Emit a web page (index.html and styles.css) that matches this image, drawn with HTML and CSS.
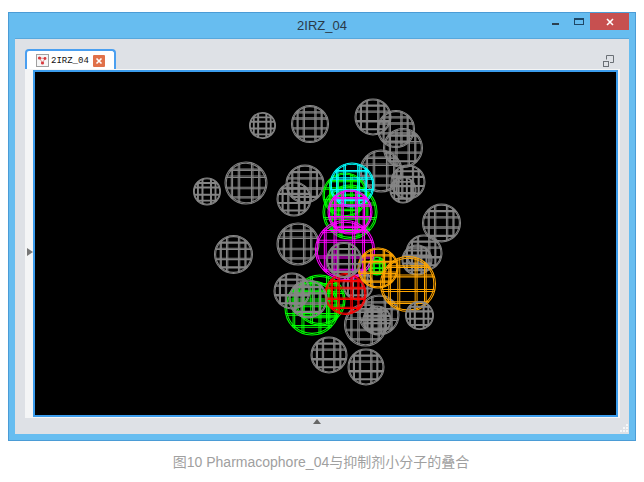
FILE: index.html
```html
<!DOCTYPE html>
<html lang="en">
<head>
  <meta charset="UTF-8" />
  <meta name="viewport" content="width=device-width, initial-scale=1.0"/>
  <title>2IRZ_04</title>
  <link rel="stylesheet" href="styles.css">
</head>
<body>
  <div class="window">
    <div class="titlebar">
      <span></span>
      <span class="title">2IRZ_04</span>
      <div class="controls">
        <span class="btn-min"></span>
        <span class="btn-max"></span>
        <span class="btn-close">
          <svg width="10" height="10" viewBox="0 0 10 10"><path class="x-mark" d="M2 2L8 8M8 2L2 8"/></svg>
        </span>
      </div>
    </div>

    <div class="panel">
      <div class="tabrow">
        <div class="tab">
          <svg class="tab-icon" width="13" height="13" viewBox="0 0 13 13">
            <rect class="tab-icon-box" x="0.5" y="0.5" width="12" height="12"/>
            <path class="tab-icon-link" d="M3.5 4L9 4.5L6.5 9Z"/>
            <circle class="tab-icon-dot" cx="3.5" cy="4" r="1.6"/>
            <circle class="tab-icon-dot" cx="9" cy="4.5" r="1.4"/>
            <circle class="tab-icon-dot" cx="6.5" cy="9" r="1.6"/>
          </svg>
          <span class="tab-label">2IRZ_04</span>
          <span class="tab-close">
            <svg width="12" height="12" viewBox="0 0 12 12"><path class="x-mark" d="M3.5 3.5L8.5 8.5M8.5 3.5L3.5 8.5"/></svg>
          </span>
        </div>
        <svg class="restore" width="11" height="12" viewBox="0 0 11 12">
          <path class="restore-line" d="M3.5 4.5V0.5H10.5V7.5H7"/>
          <rect class="restore-line" x="0.5" y="6.5" width="5" height="5"/>
        </svg>
      </div>

      <div class="frame">
        <span class="arrow-left"></span>
        <svg class="scene" viewBox="35 72 581 343">
          <defs>
            <g id="ball">
              <circle class="wire" r="1"/>
              <circle class="wire" r="0.94"/>
              <path class="wire" d="M-.96 -.26H.96M-.94 -.33H.94M-.8 -.6H.8M-.75 -.66H.75M-.96 .2H.96M-.94 .27H.94M-.76 .65H.76M-.7 .71H.7"/>
              <path class="wire" d="M-.3 -.95V.95M-.37 -.92V.92M-.64 -.76V.76M-.7 -.7V.7M.26 -.96V.96M.33 -.94V.94M.6 -.8V.8M.66 -.75V.75"/>
            </g>
          </defs>

          <g class="gray">
            <use href="#ball" transform="translate(262.5 125.5) scale(13)"/>
            <use href="#ball" transform="translate(310 124) scale(18.5)"/>
            <use href="#ball" transform="translate(246 183) scale(21)"/>
            <use href="#ball" transform="translate(207 191.5) scale(13.5)"/>
            <use href="#ball" transform="translate(305 184) scale(19)"/>
            <use href="#ball" transform="translate(294 199) scale(17)"/>
            <use href="#ball" transform="translate(298 244) scale(21)"/>
            <use href="#ball" transform="translate(233.5 254.5) scale(19)"/>
            <use href="#ball" transform="translate(373 117) scale(18)"/>
            <use href="#ball" transform="translate(396 129) scale(18.5)"/>
            <use href="#ball" transform="translate(403 148) scale(19.5)"/>
            <use href="#ball" transform="translate(381 171) scale(21)"/>
            <use href="#ball" transform="translate(408 182) scale(17)"/>
            <use href="#ball" transform="translate(403 190) scale(13)"/>
            <use href="#ball" transform="translate(441.5 223) scale(19)"/>
            <use href="#ball" transform="translate(424 253) scale(18)"/>
            <use href="#ball" transform="translate(417 260) scale(15)"/>
            <use href="#ball" transform="translate(358 285) scale(15)"/>
            <use href="#ball" transform="translate(365.5 325) scale(21)"/>
            <use href="#ball" transform="translate(379 315) scale(20)"/>
            <use href="#ball" transform="translate(377 320) scale(14)"/>
          </g>
          <g class="green">
            <use href="#ball" transform="translate(345 195) scale(22)"/>
            <use href="#ball" transform="translate(350 212) scale(27)"/>
            <use href="#ball" transform="translate(377 266) scale(9)"/>
          </g>
          <g class="cyan">
            <use href="#ball" transform="translate(352 185) scale(22)"/>
          </g>
          <g class="magenta">
            <use href="#ball" transform="translate(350 212) scale(22)"/>
            <use href="#ball" transform="translate(345 250) scale(29.5)"/>
          </g>
          <g class="orange">
            <use href="#ball" transform="translate(378 268) scale(20)"/>
            <use href="#ball" transform="translate(408 284) scale(27.5)"/>
          </g>
          <g class="green">
            <use href="#ball" transform="translate(320 300) scale(25)"/>
            <use href="#ball" transform="translate(312 308) scale(27)"/>
          </g>
          <g class="red">
            <use href="#ball" transform="translate(345.5 294) scale(20.5)"/>
          </g>
          <g class="gray">
            <use href="#ball" transform="translate(344 260) scale(17.5)"/>
            <use href="#ball" transform="translate(292 291) scale(18)"/>
            <use href="#ball" transform="translate(308 299) scale(19)"/>
            <use href="#ball" transform="translate(419.5 315.5) scale(14)"/>
            <use href="#ball" transform="translate(329 355) scale(18)"/>
            <use href="#ball" transform="translate(366 367) scale(18)"/>
          </g>
        </svg>
      </div>

      <div class="footer">
        <span class="arrow-up"></span>
        <svg class="grip" width="9" height="9" viewBox="0 0 9 9">
          <path class="grip-dots" d="M6 0h2v2H6zM3 3h2v2H3zM6 3h2v2H6zM0 6h2v2H0zM3 6h2v2H3zM6 6h2v2H6z"/>
        </svg>
      </div>
    </div>
  </div>

  <p class="caption">图10 Pharmacophore_04与抑制剂小分子的叠合</p>
</body>
</html>
```

FILE: styles.css
```css
* {
  box-sizing: border-box;
}

body {
  margin: 0;
  background: #fff;
  font-family: "Liberation Sans", "Noto Sans CJK SC", sans-serif;
}

.window {
  width: 628px;
  height: 429px;
  margin: 12px 8px 0;
  padding: 0 6px 6px;
  display: flex;
  flex-direction: column;
  background: #67bdf0;
  border: 1px solid #4b9cd6;
}

.titlebar {
  height: 25px;
  flex: none;
  display: grid;
  grid-template-columns: 1fr auto 1fr;
  align-items: start;
}

.title {
  margin-top: 5px;
  font-size: 13px;
  line-height: 15px;
  color: #2a3a48;
}

.controls {
  display: flex;
  justify-content: flex-end;
  align-items: flex-start;
}

.btn-min {
  width: 7px;
  height: 2px;
  margin-top: 10px;
  background: #2b4050;
}

.btn-max {
  width: 10px;
  height: 7px;
  margin: 5px 0 0 15px;
  border: 1px solid #1f4766;
  border-top-width: 2px;
}

.btn-close {
  width: 39px;
  height: 17px;
  margin-left: 6px;
  display: flex;
  align-items: center;
  justify-content: center;
  background: #c75050;
}

.x-mark {
  fill: none;
  stroke: #fff;
  stroke-width: 1.6;
}

.panel {
  flex: 1;
  display: flex;
  flex-direction: column;
  padding-top: 10px;
  background: #dee1e6;
  border-top: 1px solid #58a8dc;
}

.tabrow {
  height: 20px;
  flex: none;
  display: flex;
  justify-content: space-between;
  align-items: flex-start;
  padding: 0 15px 0 10px;
}

.tab {
  width: 91px;
  height: 20px;
  display: flex;
  align-items: center;
  padding: 1px 0 0 9px;
  background: #fff;
  border: 2px solid #4a9ff0;
  border-bottom: none;
  border-radius: 4px 4px 0 0;
}

.tab-icon {
  flex: none;
}

.tab-icon-box {
  fill: #f6f6f6;
  stroke: #a0a0a0;
}

.tab-icon-link {
  fill: none;
  stroke: #e09090;
}

.tab-icon-dot {
  fill: #d8383c;
}

.tab-label {
  margin-left: 2px;
  font-family: "Liberation Mono", monospace;
  font-size: 9px;
  color: #111;
}

.tab-close {
  width: 12px;
  height: 12px;
  margin-left: 4px;
  background: #e0714a;
  border-radius: 1px;
}

.tab-close svg {
  display: block;
}

.restore {
  margin-top: 6px;
}

.restore-line {
  fill: none;
  stroke: #6a6f75;
}

.frame {
  position: relative;
  height: 349px;
  flex: none;
  margin: 0 9px 0 10px;
  padding: 1px 1px 1px 8px;
  background: #f4f5f6;
}

.arrow-left {
  position: absolute;
  left: 2px;
  top: 179px;
  border-left: 6px solid #777;
  border-top: 4px solid transparent;
  border-bottom: 4px solid transparent;
}

.scene {
  display: block;
  width: 585px;
  height: 347px;
  background: #000;
  border: 2px solid #3b9cec;
}

.wire {
  fill: none;
  stroke-width: 1.05;
  vector-effect: non-scaling-stroke;
}

.gray { stroke: #858585; }
.green { stroke: #00ff00; }
.cyan { stroke: #00ffff; }
.magenta { stroke: #ff00ff; }
.orange { stroke: #ffa500; }
.red { stroke: #ff0000; }

.footer {
  flex: 1;
  display: flex;
  justify-content: center;
  position: relative;
  padding-right: 10px;
}

.arrow-up {
  width: 0;
  height: 0;
  margin-top: 1px;
  border-bottom: 5px solid #666;
  border-left: 4px solid transparent;
  border-right: 4px solid transparent;
}

.grip {
  position: absolute;
  right: 0;
  bottom: 1px;
}

.grip-dots {
  fill: #f6f7f8;
}

.caption {
  margin: 12px 2px 0 0;
  text-align: center;
  font-size: 14px;
  line-height: 18px;
  color: #a0a0a0;
}
```
